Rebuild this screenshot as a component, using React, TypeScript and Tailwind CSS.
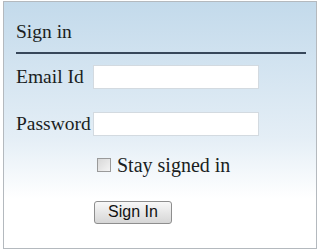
export default function App() {
  return (
    <div className="w-[320px] h-[250px] bg-white pt-px pl-[3px]">
      <div
        className="w-[314px] h-[248px] border border-[#b4b9be] bg-gradient-to-b from-[#c3daeb] via-[#e4eef6] via-55% to-white to-80% pl-3 pr-[10px] text-[#1a1e22]"
        style={{ fontFamily: '"Liberation Serif", "Times New Roman", serif' }}
      >
        <div className="pt-[18px] h-[44px] text-[19.5px] leading-6">Sign in</div>
        <div className="mt-[6px] h-[2px] bg-[#37475a]" />

        <div className="mt-[11px] flex items-center h-6">
          <label className="w-[77px] text-[19.5px] leading-6">Email Id</label>
          <input className="w-[166px] h-6 bg-white border border-[#d3dae0] outline-none" />
        </div>

        <div className="mt-[23px] flex items-center h-6">
          <label className="w-[77px] text-[19.5px] leading-6">Password</label>
          <input
            type="password"
            className="w-[166px] h-6 bg-white border border-[#d3dae0] outline-none"
          />
        </div>

        <div className="mt-[18px] flex items-center h-[22px] pl-[81px]">
          <span className="w-[14px] h-[14px] border border-[#9a9a9a] bg-gradient-to-br from-[#d8d8d8] to-[#f4f4f4] mr-[6px]" />
          <span className="text-[20px] leading-6">Stay signed in</span>
        </div>

        <div className="mt-[24px] pl-[78px]">
          <button
            className="w-[78px] h-[23px] rounded-[3px] border border-[#8e8e8e] bg-gradient-to-b from-[#f8f8f8] to-[#d6d6d6] text-[16px] leading-none text-[#111]"
            style={{ fontFamily: '"Liberation Sans", Arial, sans-serif' }}
          >
            Sign In
          </button>
        </div>
      </div>
    </div>
  );
}
